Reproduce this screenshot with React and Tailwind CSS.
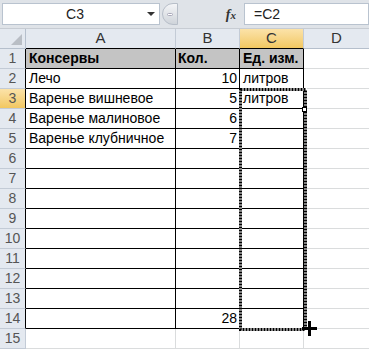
import React from "react";

const rows = [
  ["Консервы", "Кол.", "Ед. изм."],
  ["Лечо", "10", "литров"],
  ["Варенье вишневое", "5", "литров"],
  ["Варенье малиновое", "6", ""],
  ["Варенье клубничное", "7", ""],
  ["", "", ""],
  ["", "", ""],
  ["", "", ""],
  ["", "", ""],
  ["", "", ""],
  ["", "", ""],
  ["", "", ""],
  ["", "", ""],
  ["", "28", ""],
];

const font = { fontFamily: '"Liberation Sans", Arial, sans-serif' };

export default function App() {
  return (
    <div className="relative w-[369px] h-[350px] overflow-hidden bg-white text-[14px] text-black" style={font}>
      {/* toolbar */}
      <div className="h-[29px] bg-[#dfe3e8] flex items-start pt-[3px] border-b border-[#c7ccd3]">
        <div className="ml-[2px] w-[158px] h-[22px] bg-white border border-[#b9c3cf] flex items-center relative">
          <span className="flex-1 text-center text-[14px] text-[#222]">C3</span>
          <span className="w-0 h-0 border-l-[4px] border-r-[4px] border-t-[4px] border-l-transparent border-r-transparent border-t-[#333] mr-[4px]"></span>
        </div>
        <div className="w-[16px] h-[22px] ml-[2px] rounded-l-full bg-gradient-to-b from-[#f4f5f7] to-[#cfd4da] border border-[#b7bec8] flex items-center justify-center">
          <span className="w-[6px] h-[3px] rounded-full bg-white border border-[#aab]"></span>
        </div>
        <div className="w-[66px] h-[22px] flex items-center justify-end pr-[8px]">
          <span className="italic text-[14px] text-[#333] font-bold" style={{ fontFamily: '"Liberation Serif", serif' }}>f<span className="text-[11px]">x</span></span>
        </div>
        <div className="flex-1 h-[22px] bg-white border border-[#b9c3cf] flex items-center pl-[9px] text-[14px] text-[#222]">=C2</div>
      </div>
      {/* header row */}
      <div className="flex h-[20px]">
        <div className="w-[26px] bg-[#e4e9f0] border-r border-b border-[#b5bfcc] flex items-end justify-end pr-[3px] pb-[3px]">
          <svg width="11" height="11" viewBox="0 0 11 11"><polygon points="11,0 11,11 0,11" fill="#b9bec5" /></svg>
        </div>
        <div className="w-[150px] bg-[#e4e9f0] border-r border-b border-[#c3cbd6] border-b-black flex items-center justify-center text-[#333] text-[15px]">A</div>
        <div className="w-[64px] bg-[#e4e9f0] border-r border-b border-[#c3cbd6] border-b-black flex items-center justify-center text-[#333] text-[15px]">B</div>
        <div className="w-[64px] bg-gradient-to-b from-[#fbe3a9] to-[#f2c760] border-r border-b border-[#c3cbd6] border-b-black flex items-center justify-center text-[#333] text-[15px]">C</div>
        <div className="flex-1 bg-[#e4e9f0] border-b border-[#b5bfcc] flex items-center justify-center text-[#333] text-[15px]">D</div>
      </div>
      {rows.map((r, i) => (
        <div key={i} className="flex h-[20px]">
          <div className={`w-[26px] border-r border-b border-b-[#c3cbd6] flex items-center justify-center text-[14px] text-[#555] ${i === 2 ? "bg-gradient-to-b from-[#fbe3a9] to-[#f2c760]" : "bg-[#e4e9f0]"} border-r-black`}>{i + 1}</div>
          <div className={`w-[150px] border-r border-b border-black flex items-center pl-[3px] ${i === 0 ? "bg-[#c4c4c4] font-bold" : "bg-white"}`}>{r[0]}</div>
          <div className={`w-[64px] border-r border-b border-black flex items-center ${i === 0 ? "bg-[#c4c4c4] font-bold pl-[2px]" : "bg-white justify-end pr-[2px]"}`}>{r[1]}</div>
          <div className={`w-[64px] border-r border-b border-black flex items-center pl-[3px] whitespace-nowrap ${i === 0 ? "bg-[#c4c4c4] font-bold" : "bg-white"}`}>{r[2]}</div>
          <div className="flex-1 border-b border-[#dadcdd]"></div>
        </div>
      ))}
      <div className="flex h-[20px]">
        <div className="w-[26px] border-r border-b border-[#c3cbd6] bg-[#e4e9f0] flex items-center justify-center text-[14px] text-[#555]">15</div>
        <div className="w-[150px] border-r border-b border-[#dadcdd]"></div>
        <div className="w-[64px] border-r border-b border-[#dadcdd]"></div>
        <div className="w-[64px] border-r border-b border-[#dadcdd]"></div>
        <div className="flex-1 border-b border-[#dadcdd]"></div>
      </div>
      {/* marching ants */}
      <svg className="absolute left-[239px] top-[88px]" width="68" height="243" viewBox="0 0 68 243">
        <rect x="1.5" y="1.5" width="65" height="240" fill="none" stroke="white" strokeWidth="3" />
        <rect x="1.5" y="1.5" width="65" height="240" fill="none" stroke="black" strokeWidth="3" strokeDasharray="2 1" />
      </svg>
      {/* fill handle */}
      <div className="absolute left-[302px] top-[107px] w-[5px] h-[5px] bg-white border border-black"></div>
      {/* cursor */}
      <svg className="absolute left-[302px] top-[321px]" width="16" height="16" viewBox="0 0 16 16">
        <rect x="6" y="0" width="3" height="15" fill="black" />
        <rect x="0" y="6" width="15" height="3" fill="black" />
      </svg>
    </div>
  );
}
